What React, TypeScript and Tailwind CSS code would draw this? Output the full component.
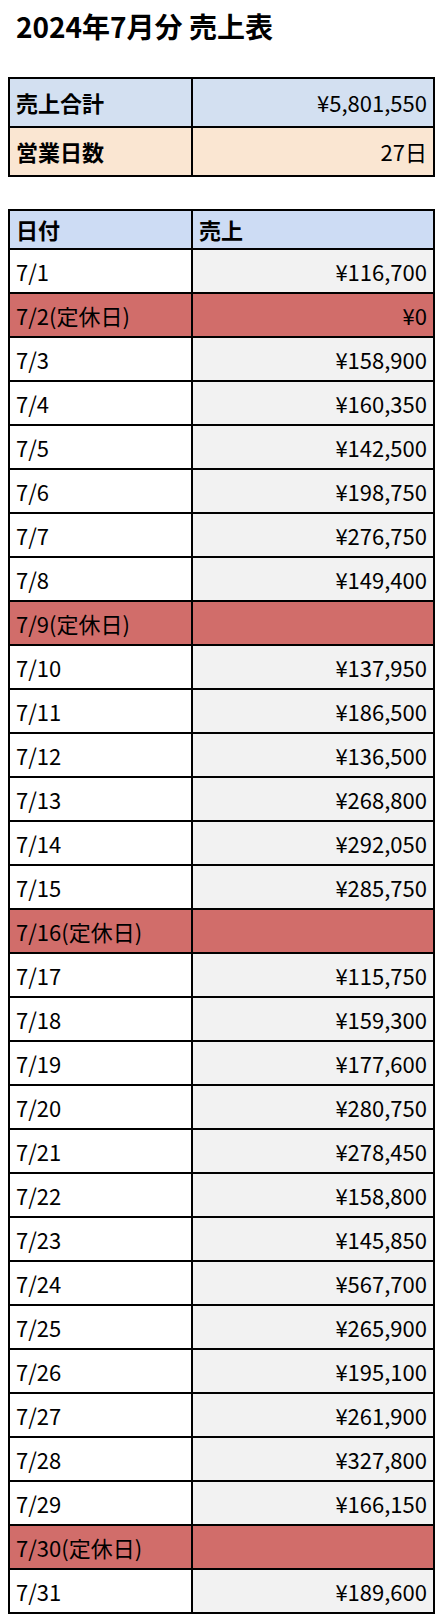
const rows: { day: string; amount: string; holiday?: boolean }[] = [
  { day: "7/1", amount: "¥116,700" },
  { day: "7/2(定休日)", amount: "¥0", holiday: true },
  { day: "7/3", amount: "¥158,900" },
  { day: "7/4", amount: "¥160,350" },
  { day: "7/5", amount: "¥142,500" },
  { day: "7/6", amount: "¥198,750" },
  { day: "7/7", amount: "¥276,750" },
  { day: "7/8", amount: "¥149,400" },
  { day: "7/9(定休日)", amount: "", holiday: true },
  { day: "7/10", amount: "¥137,950" },
  { day: "7/11", amount: "¥186,500" },
  { day: "7/12", amount: "¥136,500" },
  { day: "7/13", amount: "¥268,800" },
  { day: "7/14", amount: "¥292,050" },
  { day: "7/15", amount: "¥285,750" },
  { day: "7/16(定休日)", amount: "", holiday: true },
  { day: "7/17", amount: "¥115,750" },
  { day: "7/18", amount: "¥159,300" },
  { day: "7/19", amount: "¥177,600" },
  { day: "7/20", amount: "¥280,750" },
  { day: "7/21", amount: "¥278,450" },
  { day: "7/22", amount: "¥158,800" },
  { day: "7/23", amount: "¥145,850" },
  { day: "7/24", amount: "¥567,700" },
  { day: "7/25", amount: "¥265,900" },
  { day: "7/26", amount: "¥195,100" },
  { day: "7/27", amount: "¥261,900" },
  { day: "7/28", amount: "¥327,800" },
  { day: "7/29", amount: "¥166,150" },
  { day: "7/30(定休日)", amount: "", holiday: true },
  { day: "7/31", amount: "¥189,600" },
];

export default function App() {
  return (
    <div className="min-h-[1618px] bg-white px-2 text-black [font-family:'Noto_Sans_CJK_JP','Noto_Sans',sans-serif]">
      <h1 className="ml-2 pt-[5px] text-[28px] font-bold leading-[42px]">2024年7月分 売上表</h1>

      <table className="mt-[30px] w-[427px] table-fixed border-collapse border-2 border-black text-[22px]">
        <colgroup>
          <col className="w-[183px]" />
          <col />
        </colgroup>
        <tbody>
          <tr className="h-[49px] bg-[#d3e0f1]">
            <td className="border-2 border-black px-[6px] font-bold">売上合計</td>
            <td className="border-2 border-black px-[6px] text-right">¥5,801,550</td>
          </tr>
          <tr className="h-[49px] bg-[#fae6d2]">
            <td className="border-2 border-black px-[6px] font-bold">営業日数</td>
            <td className="border-2 border-black px-[6px] text-right">27日</td>
          </tr>
        </tbody>
      </table>

      <table className="mt-[32px] w-[427px] table-fixed border-collapse border-2 border-black text-[22px]">
        <colgroup>
          <col className="w-[183px]" />
          <col />
        </colgroup>
        <thead>
          <tr className="h-[39px] bg-[#cddcf4]">
            <th className="border-2 border-black px-[6px] text-left font-bold">日付</th>
            <th className="border-2 border-black px-[6px] text-left font-bold">売上</th>
          </tr>
        </thead>
        <tbody>
          {rows.map((r) => (
            <tr key={r.day} className="h-[44px]">
              <td
                className={
                  r.holiday
                    ? "border-2 border-black bg-[#d16d6a] px-[6px]"
                    : "border-2 border-black bg-white px-[6px]"
                }
              >
                {r.day}
              </td>
              <td
                className={
                  r.holiday
                    ? "border-2 border-black bg-[#d16d6a] px-[6px] text-right"
                    : "border-2 border-black bg-[#f2f2f2] px-[6px] text-right"
                }
              >
                {r.amount}
              </td>
            </tr>
          ))}
        </tbody>
      </table>
    </div>
  );
}
